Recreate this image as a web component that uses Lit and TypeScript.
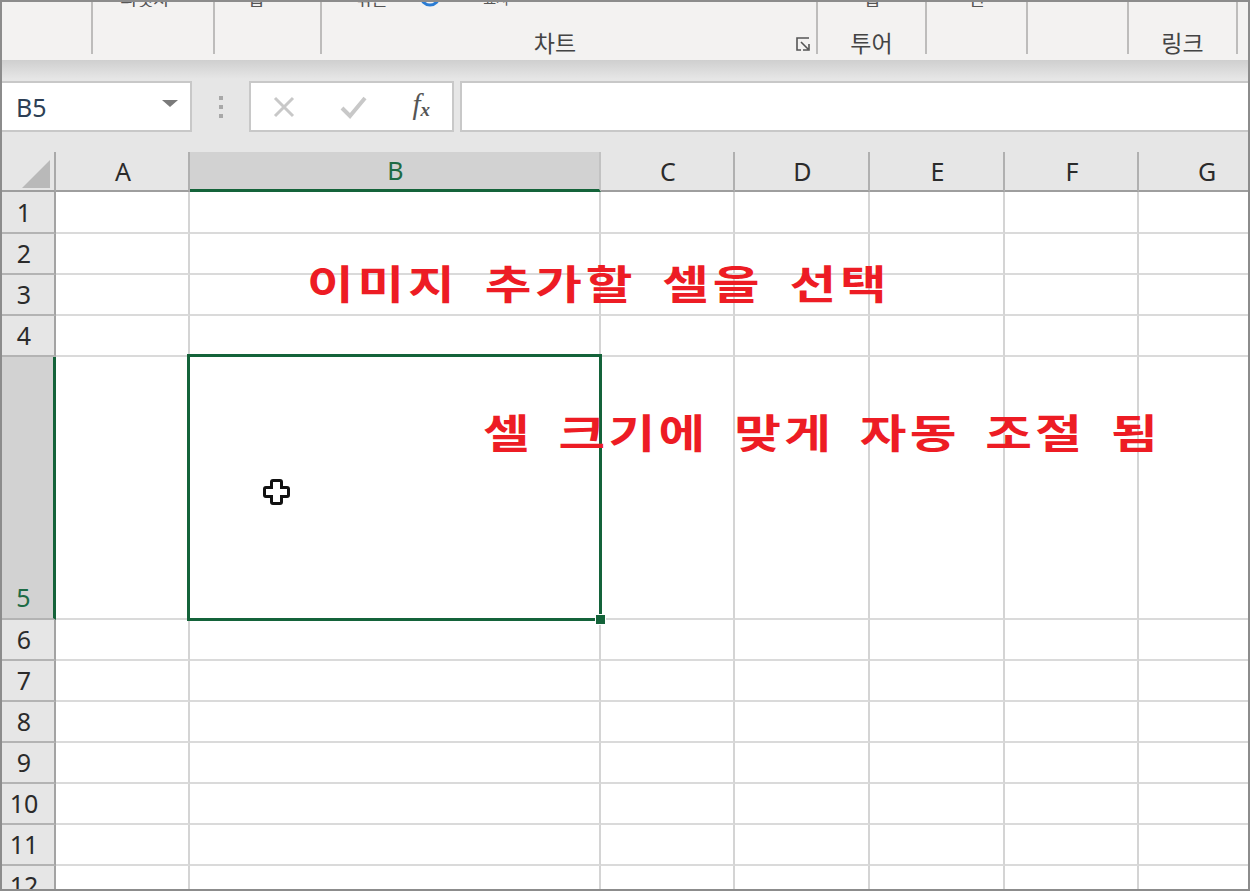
import { LitElement, html, css, svg } from "lit";
import { customElement } from "lit/decorators.js";

const COLS = ["A", "B", "C", "D", "E", "F", "G"];
const ROWS = [1, 2, 3, 4, 5, 6, 7, 8, 9, 10, 11, 12];

@customElement("app-root")
export class AppRoot extends LitElement {
  static styles = css`
    :host {
      display: block;
      position: relative;
      width: 1250px;
      height: 891px;
      box-sizing: border-box;
      border: 2px solid #8c8c8c;
      overflow: hidden;
      background: #e6e6e6;
      font-family: "Noto Sans", "Noto Sans CJK KR", sans-serif;
      color: #2e2e2e;
    }
    .ribbon {
      height: 58px;
      box-sizing: border-box;
      padding-bottom: 6px;
      background: #f3f2f1;
      display: grid;
      grid-template-columns: 91px 122px 107px 496px 109px 101px 101px 109px 1fr;
    }
    .group {
      position: relative;
      border-right: 2px solid #bdbcbb;
      display: flex;
      flex-direction: column;
      align-items: center;
      justify-content: space-between;
    }
    .group:last-child { border-right: none; }
    .clip {
      height: 5px;
      overflow: hidden;
      display: flex;
      align-items: flex-end;
      font-size: 18px;
      line-height: 18px;
      color: #555;
      font-family: "Noto Sans CJK KR", sans-serif;
    }
    .clip span { display: block; }
    .clip.left { align-self: flex-start; padding-left: 33px; gap: 30px; }
    .clip.left .small { font-size: 14px; margin-left: 11px; }
    .clip.p16 { padding-right: 16px; }
    .clip.p24 { padding-right: 24px; }
    .glabel {
      font-family: "Noto Sans CJK KR", sans-serif;
      font-size: 23px;
      line-height: 24px;
      height: 24px;
      color: #444;
    }
    .chart-label { margin-right: 28px; }
    .launcher {
      position: absolute;
      right: 5px;
      bottom: 2px;
      width: 16px;
      height: 16px;
      display: block;
    }
    .fbar {
      height: 92px;
      box-sizing: border-box;
      padding: 21px 0 20px 0;
      background: linear-gradient(#cfcfcf 0, #e6e6e6 19px);
      display: flex;
      align-items: stretch;
    }
    .box {
      background: #fff;
      border: 2px solid #c8c8c8;
      box-sizing: border-box;
      display: flex;
      align-items: center;
    }
    .name {
      width: 190px;
      border-left: none;
      padding: 0 12px 0 14px;
      justify-content: space-between;
      font-size: 25px;
      color: #2d3f55;
    }
    .arrow {
      width: 0;
      height: 0;
      border-left: 8px solid transparent;
      border-right: 8px solid transparent;
      border-top: 7px solid #7a7a7a;
      margin-top: -6px;
    }
    .grip {
      width: 58px;
      display: flex;
      flex-direction: column;
      align-items: center;
      justify-content: center;
      gap: 5px;
    }
    .grip i {
      width: 4px;
      height: 4px;
      background: #a8a8a8;
      display: block;
    }
    .fx {
      width: 205px;
      margin-left: -1px;
      justify-content: space-between;
      padding: 0 22px 0 21px;
    }
    .fx svg { display: block; }
    .fx-text {
      font-family: "Liberation Serif", serif;
      font-style: italic;
      font-size: 29px;
      color: #555;
      line-height: 1;
      margin-top: -5px;
    }
    .fx-text sub { font-size: 19px; font-weight: bold; vertical-align: -2px; line-height: 0; }
    .input {
      flex: 1;
      margin-left: 6px;
      border-right: none;
    }
    .sheet {
      position: relative;
      display: grid;
      grid-template-columns: 54px 134px 411px 134px 135px 135px 134px 136px;
      grid-template-rows: 40px 42px 41px 41px 41px 263px 41px 41px 41px 41px 41px 41px 41px;
      background: #fff;
    }
    .corner {
      background: #e6e6e6;
      border-right: 2px solid #a9a9a9;
      border-bottom: 2px solid #9e9e9e;
      box-sizing: border-box;
      display: flex;
      align-items: flex-end;
      justify-content: flex-end;
      padding: 0 4px 2px 0;
    }
    .ch {
      background: #e6e6e6;
      box-sizing: border-box;
      border-right: 2px solid #b0b0b0;
      border-bottom: 2px solid #9e9e9e;
      display: flex;
      align-items: center;
      justify-content: center;
      font-size: 25px;
      line-height: 1;
      color: #2b2b2b;
      padding-left: 2px;
    }
    .ch.sel {
      background: #d2d2d2;
      border-right-color: #c2c2c2;
      border-bottom: 3px solid #14633a;
      color: #1d6b45;
    }
    .rh {
      background: #e6e6e6;
      box-sizing: border-box;
      border-right: 2px solid #a3a3a3;
      border-bottom: 2px solid #b3b3b3;
      display: flex;
      align-items: center;
      justify-content: center;
      font-size: 25px;
      line-height: 1;
      color: #2b2b2b;
      padding-right: 8px;
    }
    .rh.sel {
      background: #d2d2d2;
      border-right: 3px solid #14633a;
      align-items: flex-end;
      padding-bottom: 8px;
      color: #1d6b45;
    }
    .cell {
      box-sizing: border-box;
      border-right: 2px solid #d4d4d4;
      border-bottom: 2px solid #dadada;
    }
    .selection {
      position: absolute;
      left: 185px;
      top: 202px;
      width: 415px;
      height: 267px;
      box-sizing: border-box;
      border: 3px solid #14633a;
    }
    .handle {
      position: absolute;
      right: -7px;
      bottom: -7px;
      width: 11px;
      height: 11px;
      background: #14633a;
      border: 1px solid #fff;
      box-sizing: border-box;
    }
    .note {
      position: absolute;
      white-space: pre;
      font-family: "Noto Sans CJK KR", sans-serif;
      font-weight: 700;
      color: #ed1c24;
      font-size: 40px;
      line-height: 48px;
      word-spacing: 8.4px;
      transform: scaleX(1.27);
      transform-origin: left top;
    }
    .note1 { left: 305px; top: 256px; letter-spacing: 3px; }
    .note2 { left: 481px; top: 405px; letter-spacing: 2.6px; }
    .cursor {
      position: absolute;
      left: 260px;
      top: 475px;
      display: block;
    }
  `;

  private launcher() {
    return html`<svg class="launcher" viewBox="0 0 16 16" fill="none" stroke="#555" stroke-width="1.6">
      <path d="M14 2H2V14H6" />
      <path d="M6 6L13 13M8 14H14V8" />
    </svg>`;
  }

  render() {
    return html`
      <div class="ribbon">
        <div class="group"><div class="clip"></div></div>
        <div class="group"><div class="clip p16"><span>피벗차</span></div></div>
        <div class="group"><div class="clip p24"><span>맵</span></div></div>
        <div class="group">
          <div class="clip left">
            <span>꺾은</span>
            <svg width="24" height="5" viewBox="0 0 24 5"><circle cx="12" cy="-6" r="9" fill="none" stroke="#2b7cd3" stroke-width="3" /></svg>
            <span class="small">표시</span>
          </div>
          <div class="glabel chart-label">차트</div>
          ${this.launcher()}
        </div>
        <div class="group"><div class="clip"><span>맵</span></div><div class="glabel">투어</div></div>
        <div class="group"><div class="clip"><span>선</span></div></div>
        <div class="group"><div class="clip"></div></div>
        <div class="group"><div class="clip"></div><div class="glabel">링크</div></div>
        <div class="group"></div>
      </div>

      <div class="fbar">
        <div class="box name"><span>B5</span><span class="arrow"></span></div>
        <div class="grip"><i></i><i></i><i></i></div>
        <div class="box fx">
          <svg width="24" height="24" viewBox="0 0 24 24" fill="none" stroke="#c8c8c8" stroke-width="3"><path d="M3 3L21 21M21 3L3 21" /></svg>
          <svg width="28" height="24" viewBox="0 0 28 24" fill="none" stroke="#c8c8c8" stroke-width="4"><path d="M2 13L10 21L25 3" /></svg>
          <span class="fx-text">f<sub>x</sub></span>
        </div>
        <div class="box input"></div>
      </div>

      <div class="sheet">
        <div class="corner">
          ${svg`<svg width="28" height="28" viewBox="0 0 28 28"><path d="M28 0V28H0Z" fill="#b9b9b9" /></svg>`}
        </div>
        ${COLS.map((c) => html`<div class="ch ${c === "B" ? "sel" : ""}">${c}</div>`)}
        ${ROWS.map(
          (r) => html`
            <div class="rh ${r === 5 ? "sel" : ""}">${r}</div>
            ${COLS.map(() => html`<div class="cell"></div>`)}
          `
        )}
        <div class="selection"><div class="handle"></div></div>
      </div>

      <div class="note note1">이미지 추가할 셀을 선택</div>
      <div class="note note2">셀 크기에 맞게 자동 조절 됨</div>

      <svg class="cursor" width="30" height="30" viewBox="0 0 30 30">
        <path d="M11 3.5H18Q19.5 3.5 19.5 5V10.5H25Q26.5 10.5 26.5 12V18Q26.5 19.5 25 19.5H19.5V25Q19.5 26.5 18 26.5H11Q9.5 26.5 9.5 25V19.5H4Q2.5 19.5 2.5 18V12Q2.5 10.5 4 10.5H9.5V5Q9.5 3.5 11 3.5Z" fill="#fff" stroke="#111" stroke-width="3" />
      </svg>
    `;
  }
}
